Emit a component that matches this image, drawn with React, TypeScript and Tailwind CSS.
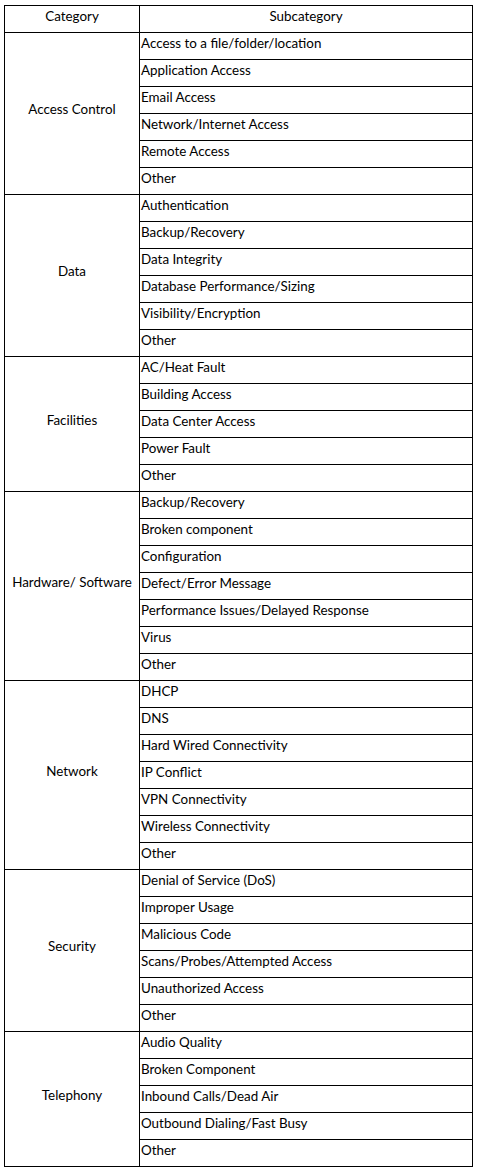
const data: [string, string[]][] = [
  ["Access Control", ["Access to a file/folder/location", "Application Access", "Email Access", "Network/Internet Access", "Remote Access", "Other"]],
  ["Data", ["Authentication", "Backup/Recovery", "Data Integrity", "Database Performance/Sizing", "Visibility/Encryption", "Other"]],
  ["Facilities", ["AC/Heat Fault", "Building Access", "Data Center Access", "Power Fault", "Other"]],
  ["Hardware/ Software", ["Backup/Recovery", "Broken component", "Configuration", "Defect/Error Message", "Performance Issues/Delayed Response", "Virus", "Other"]],
  ["Network", ["DHCP", "DNS", "Hard Wired Connectivity", "IP Conflict", "VPN Connectivity", "Wireless Connectivity", "Other"]],
  ["Security", ["Denial of Service (DoS)", "Improper Usage", "Malicious Code", "Scans/Probes/Attempted Access", "Unauthorized Access", "Other"]],
  ["Telephony", ["Audio Quality", "Broken Component", "Inbound Calls/Dead Air", "Outbound Dialing/Fast Busy", "Other"]],
];

export default function App() {
  return (
    <div className="bg-white min-h-screen pt-[5px] pl-[4px] font-['Lato',sans-serif] text-[13.4px] text-black">
      <table className="border-collapse table-fixed w-[469px]">
        <colgroup>
          <col className="w-[135px]" />
          <col />
        </colgroup>
        <thead>
          <tr className="h-[27px]">
            <th className="border border-black font-normal text-center pb-[5px] leading-none">Category</th>
            <th className="border border-black font-normal text-center pb-[5px] leading-none">Subcategory</th>
          </tr>
        </thead>
        <tbody>
          {data.map(([cat, subs]) =>
            subs.map((s, i) => (
              <tr key={cat + s} className="h-[27px]">
                {i === 0 && (
                  <td rowSpan={subs.length} className="border border-black text-center pb-[7px] leading-none">
                    {cat}
                  </td>
                )}
                <td className="border border-black pl-[1px] pb-[5px] leading-none whitespace-nowrap">{s}</td>
              </tr>
            ))
          )}
        </tbody>
      </table>
    </div>
  );
}
